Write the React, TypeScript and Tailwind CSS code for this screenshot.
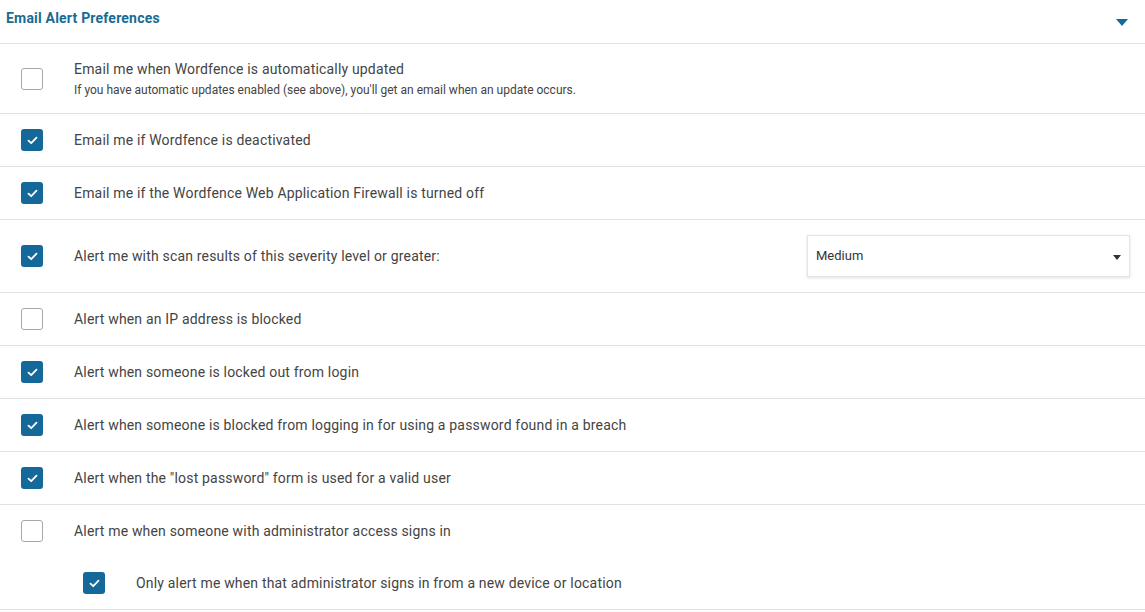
import { useState } from 'react';

interface AlertOption {
    id: string,
    label: string,
    hint?: string,
    checked: boolean,
    severity?: boolean,
    sub?: AlertOption
}

const OPTIONS: AlertOption[] = [
    { id: 'updated', label: 'Email me when Wordfence is automatically updated', hint: "If you have automatic updates enabled (see above), you'll get an email when an update occurs.", checked: false },
    { id: 'deactivated', label: 'Email me if Wordfence is deactivated', checked: true },
    { id: 'waf', label: 'Email me if the Wordfence Web Application Firewall is turned off', checked: true },
    { id: 'severity', label: 'Alert me with scan results of this severity level or greater:', checked: true, severity: true },
    { id: 'ip', label: 'Alert when an IP address is blocked', checked: false },
    { id: 'lockout', label: 'Alert when someone is locked out from login', checked: true },
    { id: 'breach', label: 'Alert when someone is blocked from logging in for using a password found in a breach', checked: true },
    { id: 'lost', label: 'Alert when the "lost password" form is used for a valid user', checked: true },
    {
        id: 'admin', label: 'Alert me when someone with administrator access signs in', checked: false,
        sub: { id: 'admin_new', label: 'Only alert me when that administrator signs in from a new device or location', checked: true }
    },
];

const Checkbox = ({ checked, onToggle }: { checked: boolean, onToggle: () => void }) => (
    <button
        type="button"
        onClick={onToggle}
        className={checked
            ? "w-[22px] h-[22px] rounded-[3px] bg-[#15689a] flex items-center justify-center shrink-0"
            : "w-[22px] h-[22px] rounded-[3px] bg-white border border-[#a8a8a8] shrink-0"}
    >
        {checked && (
            <svg width="11" height="9" viewBox="0 0 11 9" fill="none">
                <path d="M1.5 4.6 L4.2 7.2 L9.5 1.6" stroke="white" strokeWidth="1.8" strokeLinecap="round" strokeLinejoin="round" />
            </svg>
        )}
    </button>
);

const App = () => {
    const [values, setValues] = useState<Record<string, boolean>>(() => {
        const init: Record<string, boolean> = {};
        OPTIONS.forEach((o) => {
            init[o.id] = o.checked;
            if (o.sub) init[o.sub.id] = o.sub.checked;
        });
        return init;
    });
    const [severity, setSeverity] = useState('Medium');

    const toggle = (id: string) => setValues({ ...values, [id]: !values[id] });

    return (
        <div className="w-[1145px] h-[612px] bg-white overflow-hidden font-['Roboto','Liberation_Sans',sans-serif] text-[#444]">
            <div className="h-[44px] border-b border-[#e2e2e2] flex items-center justify-between pl-[6px] pr-[17px]">
                <h3 className="text-[14px] font-bold tracking-[0.2px] text-[#1a6b94] -mt-[6px]">Email Alert Preferences</h3>
                <svg width="12" height="7" viewBox="0 0 12 7" className="mt-[1px]">
                    <path d="M0 0 L12 0 L6 7 Z" fill="#15689a" />
                </svg>
            </div>

            {OPTIONS.map((opt) => (
                <div key={opt.id} className="border-b border-[#e2e2e2]">
                    <div className={opt.hint
                        ? "h-[69px] flex items-center pl-[21px] pr-[15px]"
                        : opt.severity ? "h-[72px] flex items-center pl-[21px] pr-[15px]" : "h-[52px] flex items-center pl-[21px] pr-[15px]"}>
                        <Checkbox checked={values[opt.id]} onToggle={() => toggle(opt.id)} />
                        <div className="ml-[31px] flex-1">
                            <p className="text-[14px] leading-[18px] tracking-[0.18px] text-[#444]">{opt.label}</p>
                            {opt.hint && <p className="text-[12px] leading-[16px] mt-[4px] text-[#444]">{opt.hint}</p>}
                        </div>
                        {opt.severity && (
                            <div className="relative w-[323px] h-[42px] bg-white border border-[#e4e4e4] shadow-[0_1px_3px_rgba(0,0,0,0.12)]">
                                <select
                                    value={severity}
                                    onChange={(e) => setSeverity(e.target.value)}
                                    className="appearance-none w-full h-full bg-transparent pl-[8px] text-[13px] text-[#333] outline-none"
                                >
                                    <option>Critical</option>
                                    <option>High</option>
                                    <option>Medium</option>
                                    <option>Low</option>
                                </select>
                                <svg width="8" height="5" viewBox="0 0 8 5" className="absolute right-[8px] top-[19px] pointer-events-none">
                                    <path d="M0 0 L8 0 L4 5 Z" fill="#333" />
                                </svg>
                            </div>
                        )}
                    </div>
                    {opt.sub && (
                        <div className="h-[52px] flex items-center pl-[83px] pr-[15px]">
                            <Checkbox checked={values[opt.sub.id]} onToggle={() => toggle(opt.sub!.id)} />
                            <p className="ml-[31px] text-[14px] leading-[18px] tracking-[0.18px] text-[#444]">{opt.sub.label}</p>
                        </div>
                    )}
                </div>
            ))}
        </div>
    );
};

export default App;
